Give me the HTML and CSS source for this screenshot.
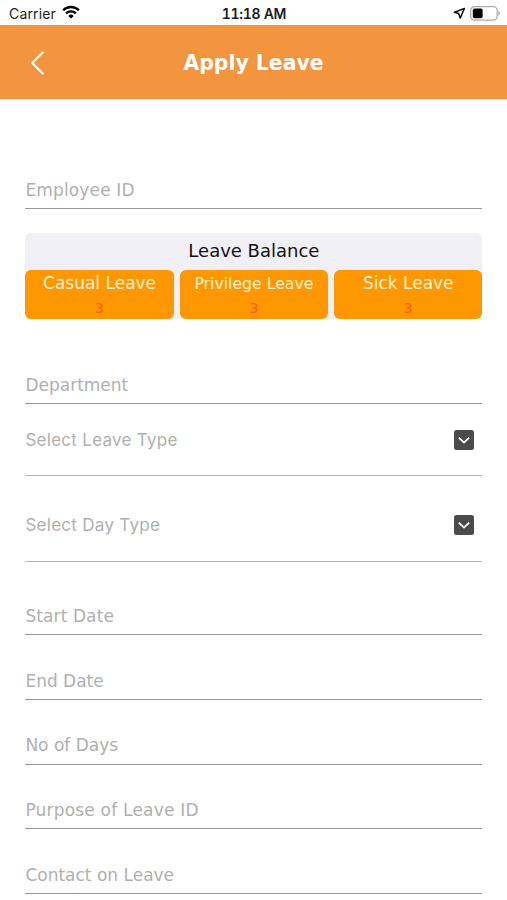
FILE: index.html
```html
<!DOCTYPE html>
<html lang="en">
<head>
<meta charset="utf-8">
<title>Apply Leave</title>
<link rel="stylesheet" href="styles.css">
</head>
<body>
<div class="status">
  <div class="carrier"><span>Carrier</span>
    <svg width="18" height="14" viewBox="0 0 18 14"><path d="M9 13.6 6.3 10.9a3.9 3.9 0 0 1 5.4 0z"/><path class="arc" d="M4.1 8.4a7 7 0 0 1 9.8 0M1.1 5.2a11.3 11.3 0 0 1 15.8 0"/></svg>
  </div>
  <div class="time">11:18 AM</div>
  <div class="indicators">
    <svg width="13" height="13" viewBox="0 0 13 13"><path class="outline" d="M11.4 1.5 1.4 5.2 5.6 6.6 7.2 11z"/></svg>
    <svg width="31" height="15" viewBox="0 0 31 15"><rect x=".7" y=".7" width="26.4" height="13.4" rx="3.6" fill="#fff" stroke="#aaa" stroke-width="1.2"/><rect x="2.8" y="2.6" width="9.8" height="9.6" rx="1.6"/><path d="M28.4 4.8c2 .9 2 4.3 0 5.2z" fill="#aaa"/></svg>
  </div>
</div>
<header class="bar">
  <svg class="back" width="16" height="26" viewBox="0 0 16 26"><path d="M13.5 1.8 2.3 13 13.5 24.2"/></svg>
  <h1>Apply Leave</h1>
</header>
<main class="form">
  <div class="field employee">Employee ID</div>
  <section class="balance">
    <h2>Leave Balance</h2>
    <div class="cards">
      <div class="card"><span class="name">Casual Leave</span><span class="count">3</span></div>
      <div class="card"><span class="name small">Privilege Leave</span><span class="count">3</span></div>
      <div class="card"><span class="name">Sick Leave</span><span class="count">3</span></div>
    </div>
  </section>
  <div class="field department">Department</div>
  <div class="select leave-type"><span>Select Leave Type</span>
    <svg width="20" height="20" viewBox="0 0 20 20"><rect width="20" height="20" rx="2.5"/><path d="m4.8 7.6 5.2 5 5.2-5"/></svg></div>
  <div class="select day-type"><span>Select Day Type</span>
    <svg width="20" height="20" viewBox="0 0 20 20"><rect width="20" height="20" rx="2.5"/><path d="m4.8 7.6 5.2 5 5.2-5"/></svg></div>
  <div class="field start">Start Date</div>
  <div class="field">End Date</div>
  <div class="field">No of Days</div>
  <div class="field wide">Purpose of Leave ID</div>
  <div class="field">Contact on Leave</div>
</main>
</body>
</html>
```
FILE: styles.css
```css
* { box-sizing: border-box; }
body {
  margin: 0;
  height: 900px;
  overflow: hidden;
  background: #fff;
  font-family: "DejaVu Sans", sans-serif;
}
h1, h2 { margin: 0; font-weight: normal; }
svg { display: block; flex: none; }

.status {
  display: grid;
  grid-template-columns: 1fr auto 1fr;
  align-items: center;
  height: 25.4px;
  padding: 1.6px 6px 0 9px;
  font: 14px/24px Inter, sans-serif;
  color: #1c1c1c;
}
.carrier, .indicators { display: flex; align-items: center; }
.carrier { gap: 6px; letter-spacing: .15px; }
.carrier svg { margin-top: -3px; fill: #000; }
.arc { fill: none; stroke: #000; stroke-width: 2.3; }
.time { margin-right: 2px; font-weight: 600; font-variant-numeric: tabular-nums; letter-spacing: -.3px; }
.indicators { justify-content: flex-end; gap: 4px; }
.outline { fill: none; stroke: #111; stroke-width: 1.6; stroke-linejoin: round; }

.bar {
  display: grid;
  grid-template-columns: 60px 1fr 60px;
  align-items: center;
  height: 73.2px;
  padding-top: 2px;
  background: #f3953f;
  color: #fff;
}
.back { margin-left: 30px; fill: none; stroke: #fff; stroke-width: 2.2; }
.bar h1 { font-size: 20.4px; font-weight: bold; text-align: center; }

.form { padding: .6px 24.6px 0 25.4px; }
.field {
  display: flex;
  align-items: flex-end;
  height: 64.75px;
  padding-bottom: 8.3px;
  border-bottom: 1px solid #999;
  color: #b0b0b0;
  font-size: 17px;
  line-height: 20px;
}
.employee { height: 110px; letter-spacing: .15px; }
.department { height: 85px; }
.start { height: 73.5px; letter-spacing: .1px; }
.wide { letter-spacing: .2px; }

.balance {
  margin-top: 24px;
  height: 86px;
  border-radius: 6px;
  background: #f1f0f6;
}
.balance h2 {
  height: 37px;
  color: #111;
  font-size: 18px;
  line-height: 35px;
  text-align: center;
}
.cards { display: grid; grid-template-columns: repeat(3, 1fr); gap: 6px; }
.card {
  display: flex;
  flex-direction: column;
  align-items: center;
  height: 49px;
  border-radius: 6px;
  background: #ff9700;
}
.name { color: #fff3d8; font-size: 17px; line-height: 27px; }
.small { font-size: 15.7px; }
.count { color: #ff5a1f; font-size: 14px; line-height: 23px; }

.select {
  display: flex;
  justify-content: space-between;
  align-items: center;
  padding-right: 8px;
  border-bottom: 1px solid #b5b5b5;
  color: #b0b0b0;
  font: 17px/20px Inter, sans-serif;
  letter-spacing: .28px;
}
.select span { padding-top: 1px; }
.select svg { fill: #4b4b4b; }
.select path { fill: none; stroke: #fff; stroke-width: 1.8; }
.leave-type { height: 72px; }
.day-type { height: 85.5px; padding-top: 12.6px; }
```
